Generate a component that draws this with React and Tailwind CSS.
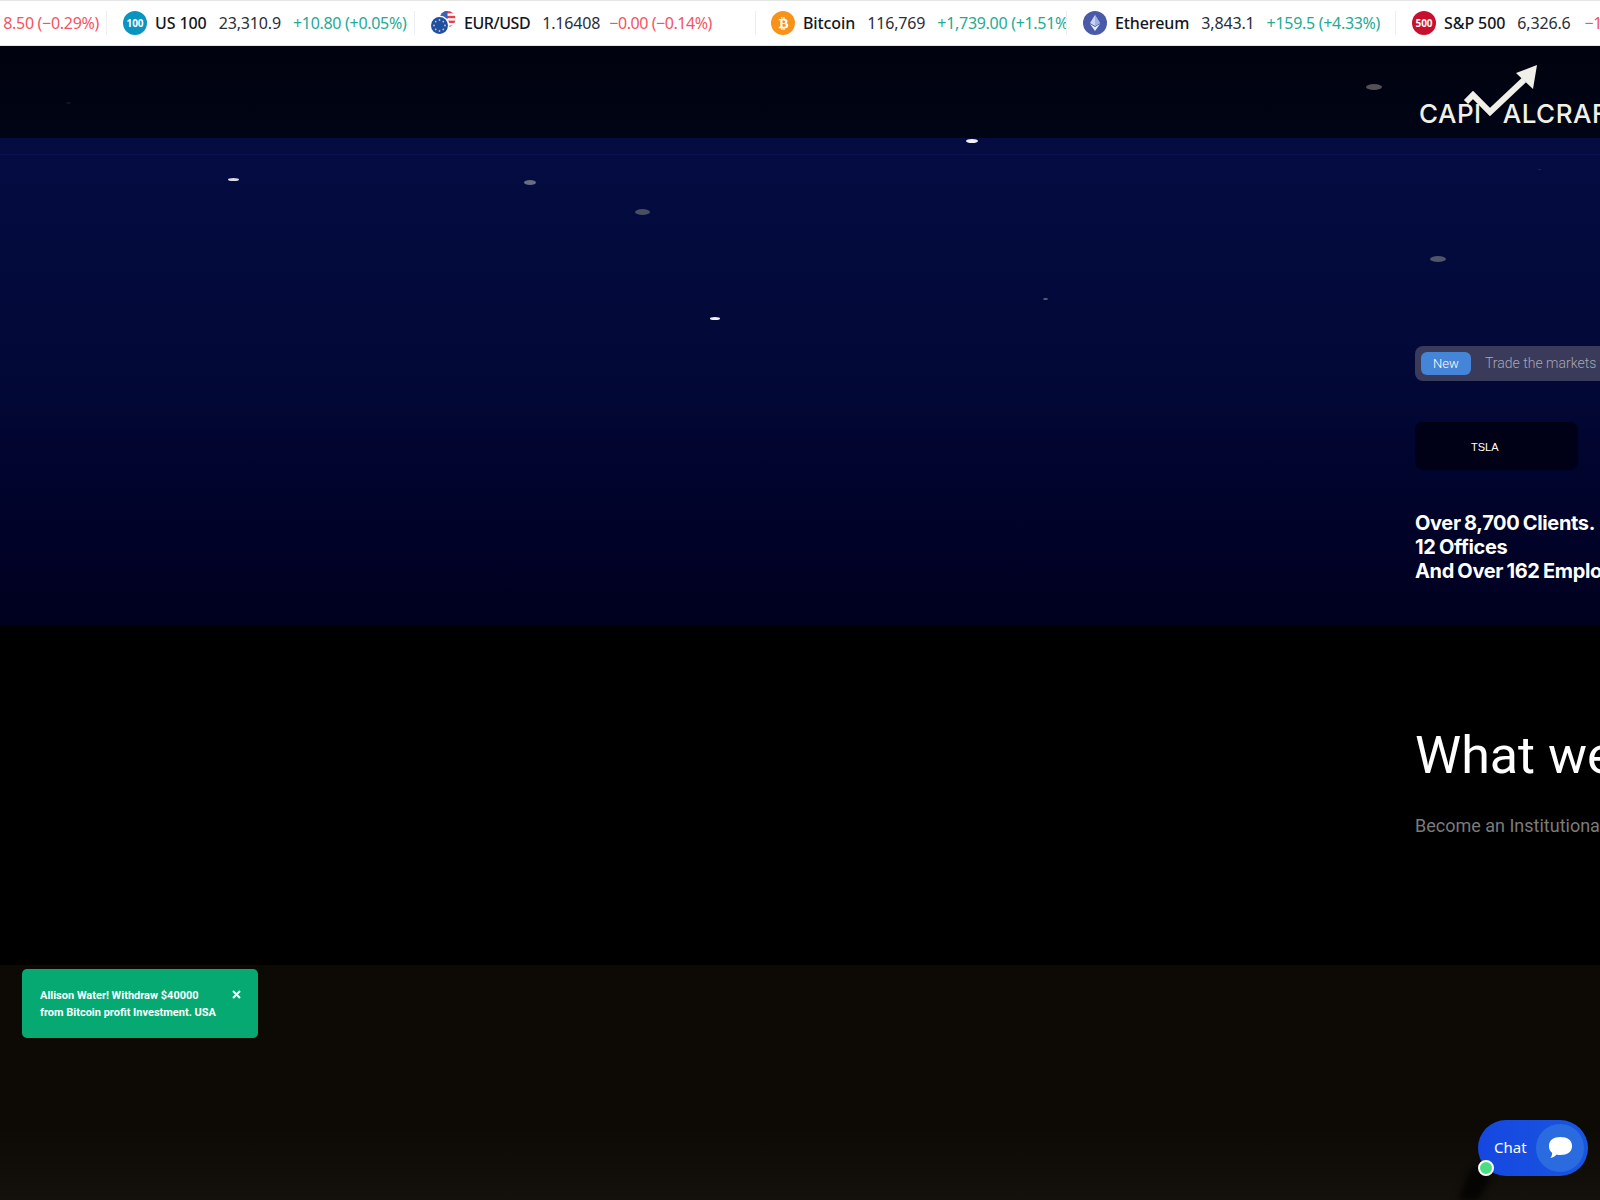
import React from "react";
import { FaBtc } from "react-icons/fa";

const tickerFont = "font-['Noto_Sans',sans-serif]";

function Sym({ children, tight }) {
  return <span className={"text-[16px] font-medium text-[#131722] whitespace-nowrap " + (tight ? "tracking-[-0.45px]" : "tracking-[-0.1px]")}>{children}</span>;
}
function Val({ children }) {
  return <span className="text-[16px] tracking-[-0.15px] text-[#2a2e39] whitespace-nowrap">{children}</span>;
}
function Up({ children }) {
  return <span className="text-[16px] tracking-[-0.3px] text-[#22ab94] whitespace-nowrap">{children}</span>;
}
function Down({ children }) {
  return <span className="text-[16px] tracking-[-0.45px] text-[#f7525f] whitespace-nowrap">{children}</span>;
}
function Badge({ className, children }) {
  return (
    <span className={"flex h-6 w-6 shrink-0 items-center justify-center rounded-full text-white " + className}>
      {children}
    </span>
  );
}

function EurUsd() {
  return (
    <svg width="26" height="24" viewBox="0 0 26 24" className="shrink-0">
      <defs>
        <clipPath id="usdclip"><circle cx="17.5" cy="8" r="8" /></clipPath>
      </defs>
      <g clipPath="url(#usdclip)">
        <rect x="9" y="0" width="17" height="16" fill="#ffffff" />
        <rect x="9" y="0" width="17" height="2.4" fill="#e8404a" />
        <rect x="9" y="4.8" width="17" height="2.4" fill="#e8404a" />
        <rect x="9" y="9.6" width="17" height="2.4" fill="#e8404a" />
        <rect x="9" y="14.4" width="17" height="2" fill="#e8404a" />
        <rect x="9" y="0" width="8.5" height="8" fill="#3c5fb8" />
      </g>
      <circle cx="9.5" cy="14.5" r="10" fill="#ffffff" />
      <circle cx="9.5" cy="14.5" r="8.5" fill="#1d4fa8" />
      <g fill="#f5c542">
        <circle cx="9.5" cy="9" r="0.9" />
        <circle cx="13.3" cy="10.6" r="0.9" />
        <circle cx="15" cy="14.5" r="0.9" />
        <circle cx="13.3" cy="18.4" r="0.9" />
        <circle cx="9.5" cy="20" r="0.9" />
        <circle cx="5.7" cy="18.4" r="0.9" />
        <circle cx="4" cy="14.5" r="0.9" />
        <circle cx="5.7" cy="10.6" r="0.9" />
      </g>
    </svg>
  );
}

function Ticker() {
  return (
    <div className={"flex h-[46px] items-center overflow-hidden border-y border-[#e6e6e6] bg-white " + tickerFont}>
      <div className="flex h-6 w-[107px] shrink-0 items-center justify-end overflow-hidden border-r border-[#eceff2] pr-[7px]">
        <span className="whitespace-nowrap text-[16px] tracking-[-0.3px] text-[#f7525f]">8.50 (−0.29%)</span>
      </div>
      <div className="flex h-6 w-[308px] shrink-0 items-center overflow-hidden border-r border-[#eceff2] pl-[16px]">
        <Badge className="bg-[#0a94c0] text-[10px] font-bold">100</Badge>
        <span className="ml-2"><Sym>US 100</Sym></span>
        <span className="ml-3"><Val>23,310.9</Val></span>
        <span className="ml-3"><Up>+10.80 (+0.05%)</Up></span>
      </div>
      <div className="flex h-6 w-[341px] shrink-0 items-center overflow-hidden border-r border-[#eceff2] pl-[15px]">
        <EurUsd />
        <span className="ml-2"><Sym tight>EUR/USD</Sym></span>
        <span className="ml-3"><Val>1.16408</Val></span>
        <span className="ml-[9px]"><Down>−0.00 (−0.14%)</Down></span>
      </div>
      <div className="flex h-6 w-[311px] shrink-0 items-center overflow-hidden border-r border-[#eceff2] pl-[15px]">
        <Badge className="bg-[#f7931a] text-[13px]"><FaBtc /></Badge>
        <span className="ml-2"><Sym>Bitcoin</Sym></span>
        <span className="ml-3"><Val>116,769</Val></span>
        <span className="ml-3"><Up>+1,739.00 (+1.51%)</Up></span>
      </div>
      <div className="flex h-6 w-[329px] shrink-0 items-center overflow-hidden border-r border-[#eceff2] pl-[16px]">
        <Badge className="bg-[#4a5aa8]">
          <svg width="10" height="16" viewBox="0 0 10 16">
            <path d="M5 0 L10 8 L5 11 L0 8 Z" fill="#c9d4f5" />
            <path d="M5 12 L10 9 L5 16 L0 9 Z" fill="#e8edfc" />
            <path d="M5 0 L5 11 L10 8 Z" fill="#9fb0e8" />
          </svg>
        </Badge>
        <span className="ml-2"><Sym>Ethereum</Sym></span>
        <span className="ml-3"><Val>3,843.1</Val></span>
        <span className="ml-3"><Up>+159.5 (+4.33%)</Up></span>
      </div>
      <div className="flex h-6 flex-1 items-center overflow-hidden pl-[16px]">
        <Badge className="bg-[#c8102e] text-[10px] font-bold">500</Badge>
        <span className="ml-2"><Sym>S&amp;P 500</Sym></span>
        <span className="ml-3"><Val>6,326.6</Val></span>
        <span className="ml-[14px]"><Down>−18.30 (−0.29%)</Down></span>
      </div>
    </div>
  );
}

function Logo() {
  return (
    <div className="relative pt-[55px] font-['Inter',sans-serif] text-[26px] font-medium leading-[26px] tracking-[0.5px] text-[#f0f0e8]">
      <div className="flex whitespace-nowrap pl-[4px]">
        <span>CAPI</span>
        <span className="ml-[21px]">ALCRAFT</span>
      </div>
      <svg width="90" height="64" viewBox="0 0 90 64" className="absolute left-[45px] top-[16px]">
        <path d="M6 40 L13 33 L30 50 L64 18" fill="none" stroke="#f0f0e8" strokeWidth="6" />
        <path d="M77 3 L56 11 L73 27 Z" fill="#f0f0e8" />
      </svg>
    </div>
  );
}

const stars = [
  "left-[228px] top-[178px] h-[3px] w-[11px] bg-white/85",
  "left-[524px] top-[180px] h-[5px] w-[12px] bg-[#686e84]",
  "left-[635px] top-[209px] h-[6px] w-[15px] bg-[#484e64]",
  "left-[710px] top-[317px] h-[3px] w-[10px] bg-white/95",
  "left-[966px] top-[139px] h-[4px] w-[12px] bg-white/95",
  "left-[1366px] top-[84px] h-[6px] w-[16px] bg-[#525256]",
  "left-[1430px] top-[256px] h-[6px] w-[16px] bg-[#505568]",
  "left-[1043px] top-[298px] h-[2px] w-[5px] bg-[#5a5f70]",
  "left-[66px] top-[102px] h-[2px] w-[5px] bg-[#15171f]",
  "left-[1538px] top-[169px] h-[1px] w-[3px] bg-[#2a3050]",
];

export default function App() {
  return (
    <div className="relative h-[1200px] w-[1600px] overflow-hidden bg-black">
      <Ticker />

      <section className="h-[579px] overflow-hidden">
        <div className="h-[92px] bg-gradient-to-b from-[#00020f] to-[#000414] pl-[1415px]">
          <Logo />
        </div>
        <div className="h-[487px] bg-gradient-to-b from-[#040c42] via-[#020836] to-[#00001f]">
          <div className="h-[17px] border-b border-[#0a1250]"></div>
          <div className="pl-[1415px]">
            <div className="mt-[191px] flex h-[35px] w-[400px] items-center rounded-lg bg-[#3a3a5a] pl-[6px] font-['Roboto',sans-serif] font-light">
              <span className="flex h-[23px] w-[50px] items-center justify-center rounded-md bg-[#4585d8] text-[13px] text-white">New</span>
              <span className="ml-[14px] whitespace-nowrap text-[14px] text-[#a8a8b4]">Trade the markets today</span>
            </div>
            <div className="mt-[41px] flex h-[48px] w-[163px] items-center rounded-lg bg-[#000017] pl-[56px] pt-[2px] font-['Liberation_Sans',sans-serif] text-[11px] text-white">
              TSLA
            </div>
            <h2 className="mt-[41px] w-[400px] font-['Inter',sans-serif] text-[20px] font-bold leading-[24px] tracking-[-0.35px] [word-spacing:-1px] text-white">
              Over 8,700 Clients.<br />12 Offices<br />And Over 162 Employees
            </h2>
          </div>
        </div>
      </section>

      <section className="h-[340px] bg-black pl-[1415px] pt-[101px]">
        <h2 className="w-[600px] font-['Roboto',sans-serif] text-[52px] font-normal leading-[60px] text-white">What we do</h2>
        <p className="mt-[26px] w-[600px] whitespace-nowrap font-['Roboto',sans-serif] text-[18px] leading-[28px] text-[#7b7b7b]">Become an Institutional Trader</p>
      </section>

      <section className="relative h-[235px] overflow-hidden bg-gradient-to-b from-[#0d0a06] from-70% to-[#14110c]">
        <svg width="160" height="90" viewBox="0 0 160 90" className="absolute right-0 bottom-0 blur-[3px]">
          <path d="M18 90 L30 60 L46 50 L50 70 L38 90 Z" fill="#050403" />
        </svg>
      </section>

      <div className="absolute left-[22px] top-[969px] flex h-[69px] w-[236px] items-start rounded-[5px] bg-[#05a971] pl-[18px] pr-[16px] pt-[18px] font-['Roboto',sans-serif] text-[11px] font-bold leading-[17px] text-white">
        <p className="w-[186px] whitespace-nowrap">Allison Water! Withdraw $40000<br />from Bitcoin profit Investment. USA</p>
        <svg width="9" height="9" viewBox="0 0 9 9" className="ml-[6px] mt-[3px] shrink-0">
          <path d="M1 1 L8 8 M8 1 L1 8" stroke="#ffffff" strokeWidth="2" />
        </svg>
      </div>

      <div className="absolute left-[1478px] top-[1120px] flex h-[56px] w-[110px] items-center rounded-[28px] bg-gradient-to-r from-[#1547e0] to-[#1a55e0] pb-[2px] pl-[16px] font-['Noto_Sans',sans-serif] text-[15px] text-white">
        <span>Chat</span>
        <span className="ml-auto mr-[4px] mt-[2px] flex h-[48px] w-[48px] items-center justify-center rounded-full bg-[#2b6be0]">
          <svg width="25" height="24" viewBox="0 0 26 24" preserveAspectRatio="none">
            <path d="M13 1 C20 1 25 4 25 10 C25 16 20 19 13 19 C11.5 19 10 19 9 18.5 C7 20.5 4 22 2.5 22 C3.8 20.4 4.4 18.5 4.2 16.8 C2 15 1 13 1 10 C1 4 6 1 13 1 Z" fill="#ffffff" />
          </svg>
        </span>
        <span className="absolute left-0 top-[40px] h-[16px] w-[16px] rounded-full border-2 border-white bg-[#4ade80]"></span>
      </div>

      {stars.map((s) => (
        <span key={s} className={"absolute rounded-[50%] blur-[0.6px] " + s}></span>
      ))}
    </div>
  );
}
